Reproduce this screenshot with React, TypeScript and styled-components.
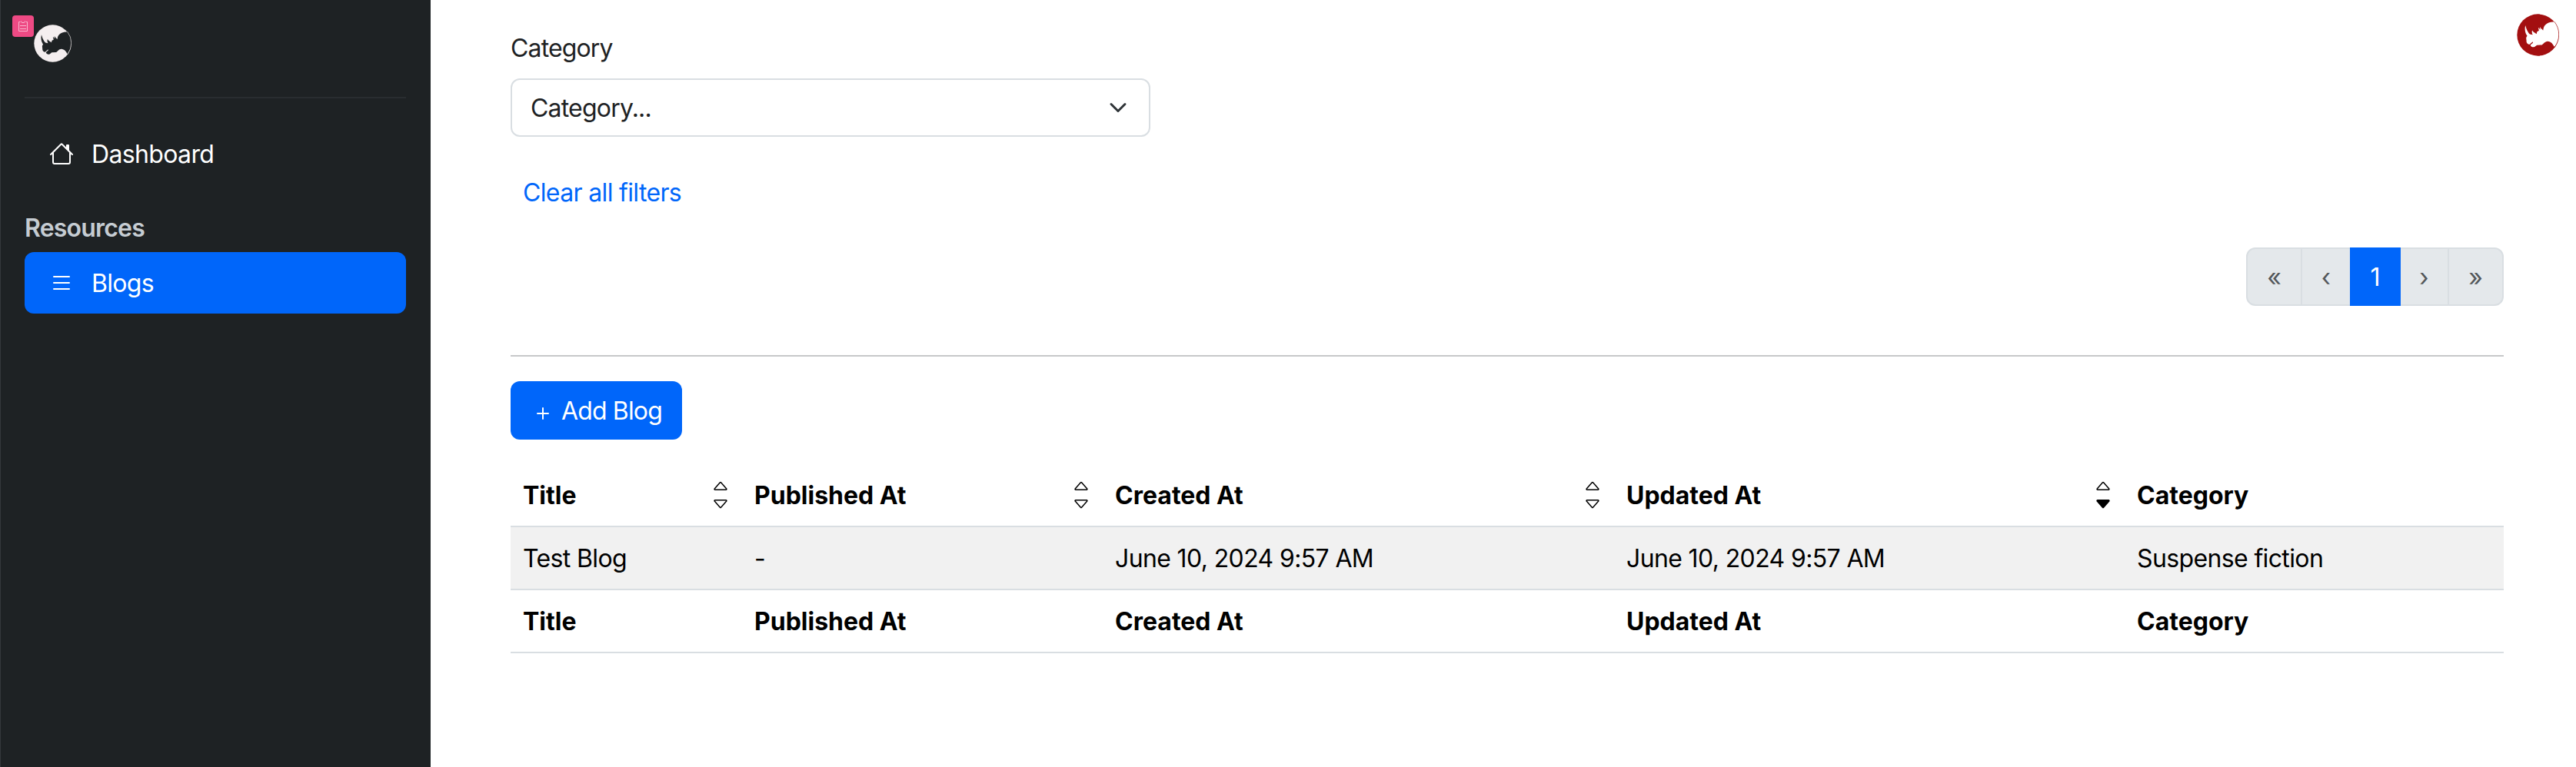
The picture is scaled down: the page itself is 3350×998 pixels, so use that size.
import React from "react";
import styled, { createGlobalStyle, css } from "styled-components";
import {
  BsCaretDown,
  BsCaretDownFill,
  BsCaretUp,
  BsHouse,
  BsList,
  BsPlus,
} from "react-icons/bs";

const colors = {
  blue: "#0066fa",
  dark: "#1e2224",
  border: "#d9dee2",
  muted: "#e4e8eb",
};

const GlobalStyle = createGlobalStyle`
  *, *::before, *::after { box-sizing: border-box; }
  body {
    margin: 0;
    background: #fff;
    color: ${colors.dark};
    font-family: Inter, "Liberation Sans", sans-serif;
    font-size: 32px;
    line-height: 48px;
    overflow: hidden;
  }
`;

const Layout = styled.div`
  display: flex;
  height: 998px;
`;

const Sidebar = styled.aside`
  width: 560px;
  flex: none;
  padding: 32px 32px 0 31px;
  border-left: 1px solid #34383b;
  background: ${colors.dark};
  color: #fff;
`;

const Brand = styled.a`
  position: relative;
  display: block;
  height: 48px;
  padding-left: 12px;
`;

const Badge = styled.span`
  position: absolute;
  left: -16px;
  top: -12px;
  width: 28px;
  height: 28px;
  border-radius: 4px;
  background: #ee4a84;
  display: flex;
  align-items: center;
  justify-content: center;
`;

const SidebarRule = styled.hr`
  margin: 46px 0 32px;
  border: 0;
  border-top: 2px solid #292d30;
`;

const NavLink = styled.a<{ $active?: boolean }>`
  display: flex;
  align-items: center;
  gap: 23px;
  height: 80px;
  padding: 0 32px;
  border-radius: 12px;
  color: #fff;
  background: ${(p) => (p.$active ? colors.blue : "transparent")};
`;

const NavHeading = styled.div`
  display: flex;
  margin: 32px 0 8px;
  font-weight: 600;
  color: #c5ccd2;
`;

const Main = styled.main`
  flex: 1;
  display: flex;
  flex-direction: column;
  padding: 38px 94px 0 104px;
`;

const UserLogo = styled.div`
  position: absolute;
  top: 18px;
  right: 22px;
  height: 54px;
`;

const Label = styled.label`
  display: flex;
  margin-bottom: 16px;
`;

const Select = styled.div`
  display: flex;
  align-items: center;
  justify-content: space-between;
  width: 832px;
  height: 76px;
  padding: 0 28px 0 24px;
  border: 2px solid ${colors.border};
  border-radius: 12px;
`;

const ClearLink = styled.a`
  display: flex;
  margin: 48px 0 48px 16px;
  color: ${colors.blue};
`;

const Pagination = styled.nav`
  display: flex;
  align-self: flex-end;
`;

const Page = styled.a<{ $width: number; $active?: boolean }>`
  display: flex;
  align-items: center;
  justify-content: center;
  width: ${(p) => p.$width}px;
  height: 76px;
  border: 2px solid ${colors.border};
  background: ${colors.muted};
  color: #53575a;
  & + & { margin-left: -2px; }
  &:first-child { border-radius: 12px 0 0 12px; }
  &:last-child { border-radius: 0 12px 12px 0; }
  ${(p) =>
    p.$active &&
    css`
      z-index: 1;
      background: ${colors.blue};
      border-color: ${colors.blue};
      color: #fff;
    `}
`;

const Rule = styled.hr`
  width: 100%;
  margin: 64px 0 32px;
  border: 0;
  border-top: 2px solid #c7c8c9;
`;

const AddButton = styled.button`
  display: flex;
  align-items: center;
  align-self: flex-start;
  gap: 8px;
  width: 223px;
  height: 76px;
  padding: 0 26px;
  border: 0;
  border-radius: 12px;
  background: ${colors.blue};
  color: #fff;
  font: inherit;
  white-space: nowrap;
  svg { flex: none; margin-top: 8px; }
`;

const Table = styled.div`
  margin-top: 32px;
  color: #000;
`;

const Row = styled.div<{ $striped?: boolean; $bold?: boolean }>`
  display: grid;
  grid-template-columns: 301px 469px 665px 664px 1fr;
  height: 82px;
  border-bottom: 2px solid ${colors.border};
  background: ${(p) => (p.$striped ? "#f1f1f1" : "#fff")};
  font-weight: ${(p) => (p.$bold ? 700 : 400)};
`;

const Cell = styled.div`
  display: flex;
  justify-content: space-between;
  align-items: center;
  padding: 16px;
  white-space: nowrap;
`;

const SortArrows = styled.span`
  display: flex;
  flex-direction: column;
`;

const Text = styled.span<{ $track?: number }>`
  display: block;
  margin: 1px 0 -1px;
  letter-spacing: ${(p) => p.$track ?? 0}px;
`;

function Rhino({ size, disc, body }: { size: number; disc: string; body: string }) {
  return (
    <svg width={size} height={size} viewBox="70 54 162 162" display="block">
      <circle cx="151" cy="135" r="80" fill={disc} />
      <path
        fill={body}
        d="M216 86C203 83 188 88 179 97C174 102 172 108 171 117L166 113C163 111 161 108 159 104Q158 110 161 115L152 106Q154 114 155 119Q150 120 147 124L146 131L138 126Q134 124 129 117Q126 127 131 134L120 132Q109 122 103 98C99 113 102 128 110 139C106 143 105 148 107 155C106 163 109 170 118 172L131 161L132 165L122 173C124 181 131 183 138 181L147 174L166 173C174 168 177 160 188 159C202 160 208 169 214 181C237 153 236 111 216 86Z"
      />
      <path d="M214 84A80 80 0 0 1 214 183" fill="none" stroke={disc} strokeWidth="2" />
    </svg>
  );
}

const columns = ["Title", "Published At", "Created At", "Updated At", "Category"];
const blog = ["Test Blog", "-", "June 10, 2024 9:57 AM", "June 10, 2024 9:57 AM", "Suspense fiction"];

export default function App() {
  return (
    <Layout>
      <GlobalStyle />
      <Sidebar>
        <Brand>
          <Rhino size={49} disc="#f4eeef" body={colors.dark} />
          <Badge>
            <svg width="14" height="16" viewBox="0 0 14 16" fill="none" stroke="#f9b6cf">
              <path d="M3.5 2.5h-2v12h11v-12h-2M4.5 1.5l1 2h3l1-2M3 7.5h8M3 11.5h8" />
            </svg>
          </Badge>
        </Brand>
        <SidebarRule />
        <NavLink>
          <BsHouse size={32} />
          <Text $track={-0.65}>Dashboard</Text>
        </NavLink>
        <NavHeading>
          <Text $track={-0.8}>Resources</Text>
        </NavHeading>
        <NavLink $active>
          <BsList size={32} />
          <Text $track={-0.7}>Blogs</Text>
        </NavLink>
      </Sidebar>
      <Main>
        <UserLogo>
          <Rhino size={55} disc="#a30f10" body="#fff" />
        </UserLogo>
        <Label>
          <Text $track={-0.85}>Category</Text>
        </Label>
        <Select>
          <Text $track={-0.8}>Category...</Text>
          <svg width="24" height="24" viewBox="0 0 16 16" fill="none" stroke="#2f3438" strokeWidth="2" strokeLinecap="round" strokeLinejoin="round">
            <path d="m2 5 6 6 6-6" />
          </svg>
        </Select>
        <ClearLink>
          <Text $track={-0.65}>Clear all filters</Text>
        </ClearLink>
        <Pagination>
          <Page $width={73}><Text>«</Text></Page>
          <Page $width={66}><Text>‹</Text></Page>
          <Page $width={66} $active><Text>1</Text></Page>
          <Page $width={65}><Text>›</Text></Page>
          <Page $width={73}><Text>»</Text></Page>
        </Pagination>
        <Rule />
        <AddButton>
          <BsPlus size={32} />
          <Text $track={-0.85}>Add Blog</Text>
        </AddButton>
        <Table>
          <Row $bold>
            {columns.map((name, i) => (
              <Cell key={name}>
                <Text>{name}</Text>
                {i < 4 && (
                  <SortArrows>
                    <BsCaretUp size={24} />
                    {i === 3 ? <BsCaretDownFill size={24} /> : <BsCaretDown size={24} />}
                  </SortArrows>
                )}
              </Cell>
            ))}
          </Row>
          <Row $striped>
            {blog.map((value, i) => (
              <Cell key={i}>
                <Text $track={-0.63}>{value}</Text>
              </Cell>
            ))}
          </Row>
          <Row $bold>
            {columns.map((name) => (
              <Cell key={name}>
                <Text>{name}</Text>
              </Cell>
            ))}
          </Row>
        </Table>
      </Main>
    </Layout>
  );
}
